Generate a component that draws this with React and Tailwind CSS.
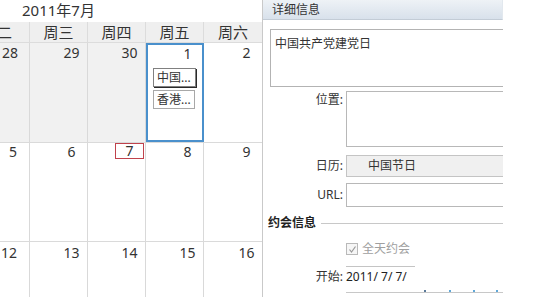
import React from "react";

const COLS = "grid grid-cols-[30px_58px_58px_58px_58px]";

function Num({ children, today }) {
  return (
    <div className="flex justify-end pr-[1px]">
      <div
        className={
          "w-[29px] text-center text-[14px] text-[#333] " +
          (today ? "h-[16px] leading-[14px] border border-[#c0424c]" : "h-[15px] leading-[15px]")
        }
      >
        {children}
      </div>
    </div>
  );
}

function Cell({ children, gray, last, className = "" }) {
  return (
    <div
      className={
        "h-full " +
        (gray ? "bg-[#f1f1f1] " : "bg-white ") +
        (last ? "" : "border-r border-[#d9d9d9] ") +
        className
      }
    >
      {children}
    </div>
  );
}

function Row({ h, cells }) {
  return (
    <div className={COLS + " border-b border-[#dadada] " + h}>{cells}</div>
  );
}

export default function App() {
  return (
    <div className="flex w-[555px] h-[297px] overflow-hidden bg-white font-['Noto_Sans','Noto_Sans_CJK_SC',sans-serif] text-[#333]">
      {/* Calendar */}
      <div className="w-[262px] shrink-0 flex flex-col">
        <div className="h-[22px] pl-[22px] pt-[1px] text-[15px] leading-[18px] text-[#333]">
          2011年7月
        </div>
        <div className={COLS + " h-[21px] bg-[#efefef] border-b border-[#dcdcdc] text-[15px] leading-[20px]"}>
          <div className="flex justify-end pr-[17px] overflow-hidden whitespace-nowrap border-r border-[#dcdcdc]">
            周二
          </div>
          <div className="text-center border-r border-[#dcdcdc]">周三</div>
          <div className="text-center border-r border-[#dcdcdc]">周四</div>
          <div className="text-center border-r border-[#dcdcdc]">周五</div>
          <div className="text-center">周六</div>
        </div>

        <Row
          h="h-[100px]"
          cells={
            <>
              <Cell gray>
                <div className="pl-[2px] pt-[2px] text-[14px] leading-[15px]">28</div>
              </Cell>
              <Cell gray className="pt-[2px]">
                <Num>29</Num>
              </Cell>
              <Cell gray className="pt-[2px]">
                <Num>30</Num>
              </Cell>
              <div className="h-full bg-white border-2 border-[#4a90cc] pt-[1px]">
                <div className="flex justify-end">
                  <div className="w-[29px] text-center text-[14px] leading-[15px]">1</div>
                </div>
                <div className="mt-[7px] ml-[5px] flex flex-col gap-[3px] items-start">
                  <div className="w-[43px] h-[19px] border border-[#808080] bg-white shadow-[1px_1px_0_#2a2a2a] text-[12px] leading-[17px] pl-[3px]">
                    中国...
                  </div>
                  <div className="w-[42px] h-[19px] border border-[#a8a8a8] bg-white text-[12px] leading-[17px] pl-[3px]">
                    香港...
                  </div>
                </div>
              </div>
              <Cell last className="pt-[2px]">
                <Num>2</Num>
              </Cell>
            </>
          }
        />
        <Row
          h="h-[99px]"
          cells={
            <>
              <Cell>
                <div className="pl-[9px] pt-[1px] text-[14px] leading-[15px]">5</div>
              </Cell>
              <Cell className="pt-[1px]">
                <Num>6</Num>
              </Cell>
              <Cell>
                <Num today>7</Num>
              </Cell>
              <Cell className="pt-[1px]">
                <Num>8</Num>
              </Cell>
              <Cell last className="pt-[1px]">
                <Num>9</Num>
              </Cell>
            </>
          }
        />
        <div className={COLS + " flex-1"}>
          <Cell>
            <div className="pl-[1px] pt-[3px] text-[14px] leading-[15px]">12</div>
          </Cell>
          <Cell className="pt-[3px]">
            <Num>13</Num>
          </Cell>
          <Cell className="pt-[3px]">
            <Num>14</Num>
          </Cell>
          <Cell className="pt-[3px]">
            <Num>15</Num>
          </Cell>
          <Cell last className="pt-[3px]">
            <Num>16</Num>
          </Cell>
        </div>
      </div>

      {/* Detail panel */}
      <div className="w-[241px] shrink-0 border-l border-[#c9c9c9] flex flex-col text-[12px]">
        <div className="h-[20px] bg-gradient-to-b from-[#eef2f6] to-[#d8e1eb] border-b border-[#c3ccd6] border-r border-r-[#e2e8ee] pl-[9px] leading-[19px] text-[#333]">
          详细信息
        </div>
        <div className="mt-[9px] ml-[7px] h-[58px] border border-r-0 border-[#b3b3b3] pl-[4px] pt-[7px] leading-[14px]">
          中国共产党建党日
        </div>

        <div className="mt-[4px] flex">
          <div className="w-[83px] text-right pr-[3px] pt-[2px] leading-[14px]">位置:</div>
          <div className="flex-1 h-[56px] border border-r-0 border-[#b8b8b8] bg-white" />
        </div>

        <div className="mt-[8px] flex items-center">
          <div className="w-[83px] text-right pr-[3px] leading-[14px]">日历:</div>
          <div className="flex-1 h-[22px] border border-r-0 border-[#c4c4c4] bg-[#f0f0f0] pl-[21px] leading-[20px]">
            中国节日
          </div>
        </div>

        <div className="mt-[6px] flex items-center">
          <div className="w-[83px] text-right pr-[3px] leading-[14px]">URL:</div>
          <div className="flex-1 h-[24px] border border-r-0 border-[#b8b8b8] bg-white" />
        </div>

        <div className="mt-[9px] ml-[5px] flex items-center gap-[5px]">
          <div className="font-bold leading-[14px] text-[#222]">约会信息</div>
          <div className="flex-1 h-px bg-[#c8c8c8]" />
        </div>

        <div className="mt-[12px] ml-[83px] flex items-center gap-[4px]">
          <div className="w-[12px] h-[12px] border border-[#b9b9b9] bg-[#f6f6f6] flex items-center justify-center">
            <svg width="9" height="9" viewBox="0 0 9 9">
              <path d="M1.5 4.5 L3.5 7 L7.5 1.5" fill="none" stroke="#9a9a9a" strokeWidth="1.2" />
            </svg>
          </div>
          <div className="leading-[14px] text-[#a0a0a0]">全天约会</div>
        </div>

        <div className="mt-[10px] flex">
          <div className="w-[83px] text-right pr-[3px] pt-[4px] leading-[14px]">开始:</div>
          <div className="flex-1 flex flex-col">
            <div className="w-[69px] h-[22px] border-t border-[#c4c4c4] pt-[2px] leading-[16px] text-[#222]">
              2011/ 7/ 7/
            </div>
            <div className="relative mt-[4px] h-px bg-[#c8c8c8]">
              <span className="absolute left-[78px] top-[-2px] w-[2px] h-[2px] bg-[#5a7a9a]" />
              <span className="absolute left-[103px] top-[-2px] w-[2px] h-[2px] bg-[#5fa8d8]" />
              <span className="absolute left-[127px] top-[-2px] w-[2px] h-[2px] bg-[#5fa8d8]" />
              <span className="absolute left-[150px] top-[-2px] w-[2px] h-[2px] bg-[#5fa8d8]" />
            </div>
          </div>
        </div>
      </div>
      <div className="flex-1 bg-white" />
    </div>
  );
}
